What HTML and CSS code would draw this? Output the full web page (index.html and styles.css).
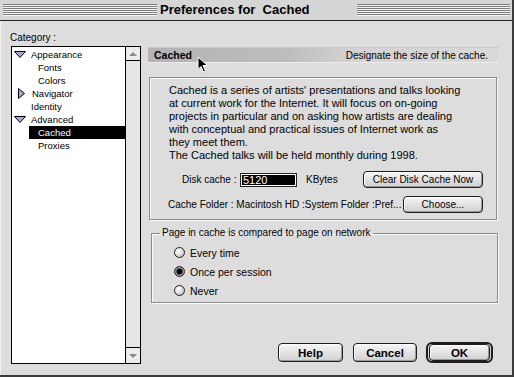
FILE: index.html
```html
<!DOCTYPE html>
<html>
<head>
<meta charset="utf-8">
<link rel="stylesheet" href="styles.css">
</head>
<body>
<div class="window">
  <div class="titlebar">
    <div class="stripes left"></div>
    <div class="title">Preferences for&nbsp; Cached</div>
    <div class="stripes right"></div>
  </div>
  <div class="content">
    <div class="sidebar">
      <div class="cat-label">Category :</div>
      <div class="listbox">
        <div class="items">
          <div class="row"><span class="tw down"><svg width="12" height="7" viewBox="0 0 12 7"><path d="M0.5 0.5 H11.5 L6 6.5 Z" fill="#a8a8d8" stroke="#000" stroke-width="1"/></svg></span>Appearance</div>
          <div class="row sub">Fonts</div>
          <div class="row sub">Colors</div>
          <div class="row"><span class="tw right"><svg width="7" height="11" viewBox="0 0 7 11"><path d="M0.5 0.5 V10.5 L6.5 5.5 Z" fill="#a8a8d8" stroke="#000" stroke-width="1"/></svg></span>Navigator</div>
          <div class="row plain">Identity</div>
          <div class="row"><span class="tw down"><svg width="12" height="7" viewBox="0 0 12 7"><path d="M0.5 0.5 H11.5 L6 6.5 Z" fill="#a8a8d8" stroke="#000" stroke-width="1"/></svg></span>Advanced</div>
          <div class="row sub selected">Cached</div>
          <div class="row sub">Proxies</div>
        </div>
        <div class="scrollbar">
          <div class="arrow up"><svg width="8" height="4" viewBox="0 0 8 4"><path d="M0 4 L4 0 L8 4 Z" fill="#8a8a8a"/></svg></div>
          <div class="track"></div>
          <div class="arrow dn"><svg width="8" height="4" viewBox="0 0 8 4"><path d="M0 0 L4 4 L8 0 Z" fill="#8a8a8a"/></svg></div>
        </div>
      </div>
    </div>
    <div class="main">
      <div class="header">
        <span class="h-title">Cached</span>
        <span class="h-desc">Designate the size of the cache.</span>
      </div>
      <div class="infobox">
        <p class="desc">Cached is a series of artists' presentations and talks looking<br>at current work for the Internet. It will focus on on-going<br>projects in particular and on asking how artists are dealing<br>with conceptual and practical issues of Internet work as<br>they meet them.<br>The Cached talks will be held monthly during 1998.</p>
        <div class="disk-row">
          <span class="disk-label">Disk cache :</span>
          <span class="field"><span class="sel">5120</span></span>
          <span class="unit">KBytes</span>
          <button class="btn small clear">Clear Disk Cache Now</button>
        </div>
        <div class="folder-row">
          <span class="folder-label">Cache Folder : Macintosh HD :System Folder :Pref...</span>
          <button class="btn small choose">Choose...</button>
        </div>
      </div>
      <fieldset class="group">
        <legend>Page in cache is compared to page on network</legend>
        <div class="radio"><span class="dot"></span>Every time</div>
        <div class="radio"><span class="dot on"></span>Once per session</div>
        <div class="radio"><span class="dot"></span>Never</div>
      </fieldset>
      <div class="buttons">
        <button class="btn big help">Help</button>
        <button class="btn big cancel">Cancel</button>
        <div class="default-ring"><button class="btn big ok">OK</button></div>
      </div>
    </div>
  </div>
  <svg class="cursor" width="12" height="17" viewBox="0 0 12 17"><path d="M1 1 L1 13.5 L4 10.5 L6.5 16 L8.5 15 L6 9.5 L10.5 9.5 Z" fill="#000" stroke="#fff" stroke-width="1"/></svg>
</div>
</body>
</html>
```
FILE: styles.css
```css
html, body {
  margin: 0;
  padding: 0;
  background: #dddddd;
}
.window {
  position: relative;
  width: 514px;
  height: 377px;
  box-sizing: border-box;
  background: #dddddd;
  border-right: 2px solid #3c3c3c;
  border-bottom: 2px solid #3c3c3c;
  font-family: "Liberation Sans", Arial, sans-serif;
  color: #000;
  display: flex;
  flex-direction: column;
  overflow: hidden;
}
.titlebar {
  height: 20px;
  border-bottom: 1px solid #222;
  background: #d6d6d6;
  display: flex;
  align-items: center;
  flex: none;
}
.stripes {
  height: 12px;
  background: repeating-linear-gradient(to bottom, #7c7c7c 0 1px, #f4f4f4 1px 2px);
}
.stripes.left { width: 154px; margin-left: 3px; }
.stripes.right { width: 153px; }
.title {
  width: 197px;
  padding-left: 3px;
  font-weight: bold;
  font-size: 13px;
  line-height: 16px;
  white-space: nowrap;
}
.content {
  flex: 1;
  display: flex;
  padding-left: 10px;
  border-left: 1px solid #f2f2f2;
}
.sidebar {
  width: 130px;
  flex: none;
}
.cat-label {
  font-size: 10px;
  line-height: 12px;
  padding-top: 11px;
  margin-left: -1px;
}
.listbox {
  margin-top: 2px;
  height: 318px;
  box-sizing: border-box;
  border: 1px solid #000;
  background: #fff;
  display: flex;
}
.items {
  flex: 1;
  padding-top: 1px;
  font-size: 9.5px;
}
.row {
  height: 13px;
  line-height: 13px;
  display: flex;
  align-items: center;
  white-space: nowrap;
}
.row.sub { padding-left: 26px; }
.row.plain { padding-left: 19px; }
.row.selected {
  margin-left: 17px;
  padding-left: 9px;
  background: #000;
  color: #fff;
}
.tw {
  width: 12px;
  margin-left: 2px;
  margin-right: 5px;
  display: flex;
  align-items: center;
  justify-content: center;
}
.tw.right { justify-content: flex-start; padding-left: 4px; width: 8px; margin-right: 6px; }
.tw svg { display: block; }
.scrollbar {
  width: 14px;
  border-left: 1px solid #000;
  background: #ececec;
  display: flex;
  flex-direction: column;
}
.arrow {
  height: 13px;
  display: flex;
  align-items: center;
  justify-content: center;
  background: #ececec;
}
.arrow svg { display: block; }
.arrow.up { border-bottom: 1px solid #000; }
.arrow.dn { border-top: 1px solid #000; height: 15px; }
.track { flex: 1; background: #e6e6e6; }
.main {
  width: 350px;
  margin-left: 7px;
  padding-top: 26px;
  flex: none;
}
.header {
  height: 16px;
  box-sizing: border-box;
  display: flex;
  align-items: center;
  justify-content: space-between;
  padding: 0 10px 0 6px;
  background: linear-gradient(to right, #b3b3b3 0%, #bdbdbd 40%, #d2d2d2 58%, #d9d9d9 100%);
  border-top: 1px solid #c8c8c8;
  border-bottom: 1px solid #ececec;
}
.h-title {
  font-weight: bold;
  font-size: 10.5px;
}
.h-desc {
  font-size: 10px;
}
.infobox {
  margin: 14px 1px 0 1px;
  height: 143px;
  box-sizing: border-box;
  border: 1px solid #8a8a8a;
  box-shadow: 1px 1px 0 #fafafa, inset 1px 1px 0 #fafafa;
  padding: 6px 13px 0 19px;
}
.desc {
  margin: 0;
  font-size: 11px;
  line-height: 13px;
  white-space: nowrap;
}
.disk-row {
  display: flex;
  align-items: center;
  height: 17px;
  margin-top: 9px;
  font-size: 10px;
}
.disk-label { margin-left: 13px; width: 49px; white-space: nowrap; }
.field {
  margin-left: 9px;
  width: 57px;
  height: 14px;
  box-sizing: border-box;
  border: 1px solid #222;
  background: #fff;
  padding: 1px;
  display: flex;
}
.sel {
  flex: 1;
  background: #000;
  color: #fff;
  font-size: 11px;
  line-height: 10px;
  padding-left: 1px;
}
.unit { margin-left: 9px; }
.btn {
  font-family: "Liberation Sans", Arial, sans-serif;
  color: #000;
  border: 1px solid #1e1e1e;
  border-radius: 4px;
  background: linear-gradient(to bottom, #f6f6f6, #d0d0d0);
  box-shadow: inset 1px 1px 0 #ffffff, inset -1px -1px 0 #9a9a9a;
  padding: 0;
  margin: 0;
  box-sizing: border-box;
}
.btn.small { font-size: 10px; height: 17px; }
.clear { margin-left: auto; width: 120px; }
.folder-row {
  display: flex;
  align-items: center;
  height: 17px;
  margin-top: 8px;
  font-size: 10px;
}
.folder-label { margin-left: -1px; white-space: nowrap; }
.choose { margin-left: auto; width: 80px; }
.group {
  margin: 7px 0 0 3px;
  padding: 4px 0 2px 22px;
  width: 347px;
  box-sizing: border-box;
  border: 1px solid #8a8a8a;
  box-shadow: 1px 1px 0 #fafafa, inset 1px 1px 0 #fafafa;
  min-width: 0;
}
.group legend {
  font-size: 10px;
  line-height: 12px;
  padding: 0 3px 0 2px;
  margin-left: -14px;
  white-space: nowrap;
}
.radio {
  height: 19px;
  display: flex;
  align-items: center;
  font-size: 10.5px;
}
.dot {
  width: 11px;
  height: 11px;
  box-sizing: border-box;
  border-radius: 50%;
  border: 1px solid #222;
  background: radial-gradient(circle at 35% 35%, #ffffff 0, #e4e4e4 40%, #a8a8a8 100%);
  margin-right: 5px;
  position: relative;
}
.dot.on {
  background: radial-gradient(circle at 50% 50%, #000 0 2.6px, #777 3.2px, #d8d8d8 100%);
}
.buttons {
  margin-top: 39px;
  display: flex;
  align-items: center;
  justify-content: flex-end;
  padding-right: 5px;
}
.btn.big {
  font-weight: bold;
  font-size: 11.5px;
  height: 19px;
}
.help { width: 65px; margin-right: 10px; }
.cancel { width: 64px; margin-right: 9px; }
.default-ring {
  width: 67px;
  height: 21px;
  box-sizing: border-box;
  border: 2px solid #1e1e1e;
  border-radius: 6px;
  padding: 0 1px;
  display: flex;
  align-items: center;
  background: #d8d8d8;
}
.btn.ok { width: 61px; height: 17px; }
.cursor {
  position: absolute;
  left: 197px;
  top: 56px;
}
```
